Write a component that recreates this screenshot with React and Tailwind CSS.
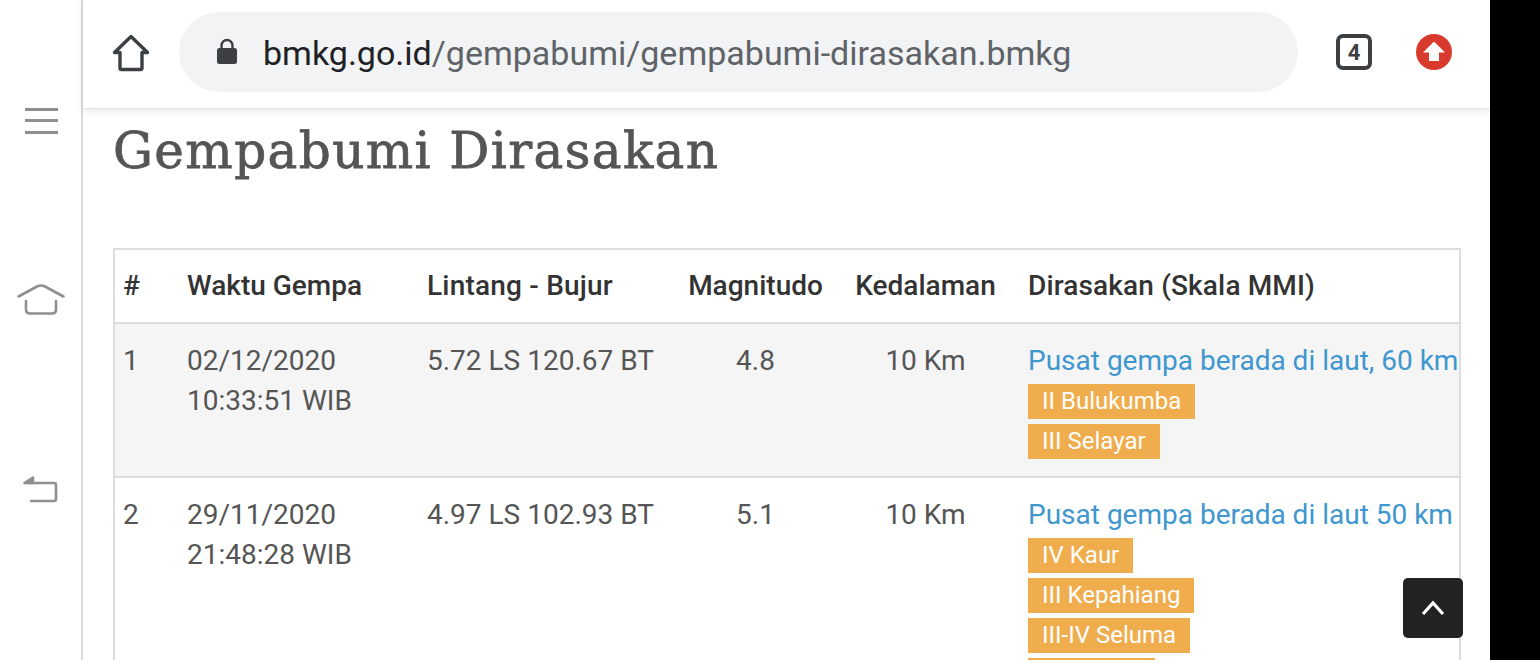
import React from 'react'

const rows = [
  {
    no: 1, date: '02/12/2020', time: '10:33:51 WIB', pos: '5.72 LS 120.67 BT', mag: '4.8', depth: '10 Km',
    desc: 'Pusat gempa berada di laut, 60 km',
    areas: ['II Bulukumba', 'III Selayar'],
  },
  {
    no: 2, date: '29/11/2020', time: '21:48:28 WIB', pos: '4.97 LS 102.93 BT', mag: '5.1', depth: '10 Km',
    desc: 'Pusat gempa berada di laut 50 km',
    areas: ['IV Kaur', 'III Kepahiang', 'III-IV Seluma', 'III Rejang'],
  },
]

const Sidebar = () => (
  <div className="relative w-[83px] shrink-0 border-r-2 border-[#dcdcdc] bg-white">
    <svg className="absolute left-[24px] top-[107px]" width="36" height="28" viewBox="0 0 36 28" fill="none" stroke="#8f8f8f" strokeWidth="3">
      <path d="M1 2.5h33M1 13.5h33M1 25.5h33" />
    </svg>
    <svg className="absolute left-[16px] top-[283px]" width="50" height="34" viewBox="0 0 50 34" fill="none" stroke="#8f8f8f" strokeWidth="2.6" strokeLinecap="round" strokeLinejoin="round">
      <path d="M2.5 13.5 21 3.5q4-2 8 0l18.5 10" />
      <path d="M10 18v8.500q0 4 4 4h22q4 0 4-4V18" />
    </svg>
    <svg className="absolute left-[22px] top-[475px]" width="38" height="32" viewBox="0 0 38 32" fill="none" stroke="#8f8f8f" strokeWidth="2.6" strokeLinecap="round" strokeLinejoin="round">
      <path d="M5 8h27q2 0 2 2v14q0 2-2 2H9" />
      <path d="M11 2.500 2.500 8 11 8Z" fill="#8f8f8f" />
    </svg>
  </div>
)

const TopBar = () => (
  <div className="relative z-10 flex h-[109px] shrink-0 items-center border-b border-[#e4e6e8] bg-white pb-[4px] shadow-[0_2px_8px_rgba(0,0,0,0.10)]">
    <svg className="ml-[29px] mt-[2px] shrink-0" width="38" height="38" viewBox="0 0 38 38" fill="none" stroke="#3c4043" strokeWidth="3.4" strokeLinejoin="round">
      <path d="M2.500 18.500 19 2.500l16.500 16H30V34q0 1.500-1.500 1.500h-19Q8 35.500 8 34V18.500Z" />
    </svg>
    <div className="ml-[29px] flex h-[80px] w-[1119px] items-center rounded-full bg-[#f1f3f4] pl-[37px]">
      <svg className="shrink-0" width="22" height="28" viewBox="0 0 22 28">
        <path d="M5.500 11V7.500a5.500 5.500 0 0 1 11 0V11" fill="none" stroke="#3c4043" strokeWidth="2.400" />
        <rect x="1" y="10" width="20" height="16" rx="2.500" fill="#3c4043" />
      </svg>
      <span className="ml-[25px] whitespace-nowrap pt-[2px] text-[34px] text-[#5f6368]">
        <span className="text-[#202124]">bmkg.go.id</span>/gempabumi/gempabumi-dirasakan.bmkg
      </span>
    </div>
    <div className="ml-[38px] flex h-[36px] w-[36px] items-center justify-center rounded-[7px] border-[4px] border-[#3c4043] text-[22px] font-bold text-[#3c4043]">
      4
    </div>
    <svg className="ml-[44px]" width="36" height="36" viewBox="0 0 36 36">
      <circle cx="18" cy="18" r="18" fill="#d93a2e" />
      <path d="M18 7.500 29 18.500h-6V27H13v-8.500H7Z" fill="#fff" />
    </svg>
  </div>
)

const Badge = ({ children }) => (
  <div className="mt-[5px] w-fit bg-[#f0ad4e] px-[14px] text-[24px] leading-[35px] text-[#fff]">{children}</div>
)

const th = 'h-[74px] text-[28px] font-medium text-[#333] whitespace-nowrap'
const td = 'pt-[17px] pb-[17px] align-top text-[28px] leading-[40px] text-[#555]'

const App = () => {
  return (
    <div className="flex h-[660px] w-[1540px] overflow-hidden bg-black font-['Roboto',sans-serif]">
      <Sidebar />
      <div className="flex w-[1407px] shrink-0 flex-col bg-white">
        <TopBar />
        <div className="pl-[30px] pr-[29px]">
          <h1 className="mt-[8px] whitespace-nowrap font-['DejaVu_Serif',serif] text-[50px] leading-[68px] tracking-[1.4px] text-[#555] [-webkit-text-stroke:0.8px_#555]">
            Gempabumi Dirasakan
          </h1>
          <table className="mt-[63px] w-[1348px] table-fixed border-collapse border-2 border-[#dddddd]">
            <colgroup>
              <col className="w-[64px]" />
              <col className="w-[240px]" />
              <col className="w-[260px]" />
              <col className="w-[155px]" />
              <col className="w-[186px]" />
              <col />
            </colgroup>
            <thead>
              <tr className="border-b-2 border-[#dddddd]">
                <th className={th + ' pl-[8px] text-left'}>#</th>
                <th className={th + ' pl-[9px] text-left'}>Waktu Gempa</th>
                <th className={th + ' pl-[9px] text-left tracking-[0.2px]'}>Lintang - Bujur</th>
                <th className={th + ' text-center'}>Magnitudo</th>
                <th className={th + ' pr-[1px] text-center'}>Kedalaman</th>
                <th className={th + ' pl-[9px] text-left tracking-[0.15px]'}>Dirasakan (Skala MMI)</th>
              </tr>
            </thead>
            <tbody>
              {rows.map((row, i) => (
                <tr key={row.no} className={i % 2 === 0 ? 'border-b-2 border-[#dddddd] bg-[#f5f5f5]' : 'bg-white'}>
                  <td className={td + ' pl-[8px]'}>{row.no}</td>
                  <td className={td + ' pl-[9px]'}>{row.date}<br />{row.time}</td>
                  <td className={td + ' pl-[9px] whitespace-nowrap'}>{row.pos}</td>
                  <td className={td + ' text-center'}>{row.mag}</td>
                  <td className={td + ' pr-[1px] text-center'}>{row.depth}</td>
                  <td className={td + ' overflow-hidden whitespace-nowrap pl-[9px]'}>
                    <div className="-mb-px leading-[39px] text-[#4096ce]">{row.desc}</div>
                    {row.areas.map((a) => <Badge key={a}>{a}</Badge>)}
                  </td>
                </tr>
              ))}
            </tbody>
          </table>
        </div>
      </div>
      <div className="absolute left-[1403px] top-[578px] flex h-[60px] w-[60px] items-center justify-center rounded-[5px] bg-[#222222]">
        <svg width="24" height="16" viewBox="0 0 24 16" fill="none" stroke="#fff" strokeWidth="3.200">
          <path d="M2 14 12 3l10 11" />
        </svg>
      </div>
    </div>
  )
}

export default App
